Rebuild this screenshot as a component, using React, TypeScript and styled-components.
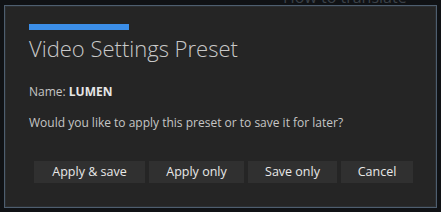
import React from "react";
import styled, { createGlobalStyle } from "styled-components";

const Global = createGlobalStyle`
  html, body { margin: 0; padding: 0; background: #101215; }
  body { width: 441px; height: 212px; overflow: hidden; font-family: "Open Sans", "Noto Sans", sans-serif; }
`;

const Page = styled.div`
  position: relative;
  width: 441px;
  height: 212px;
  padding-top: 5px;
  box-sizing: border-box;
`;

const BehindText = styled.div`
  position: absolute;
  left: 283px;
  top: -14px;
  font-size: 16px;
  color: #3a4047;
  white-space: nowrap;
`;

const Dialog = styled.div`
  position: relative;
  margin-left: 4px;
  width: 433px;
  height: 203px;
  box-sizing: border-box;
  background: #252525;
  border: 1px solid #4e5e6f;
  box-shadow: inset 0 0 0 1px #2b2e31;
  padding: 18px 23px 0 24px;
  display: flex;
  flex-direction: column;
`;

const AccentBar = styled.div`
  width: 100px;
  height: 6px;
  background: #3b8ee8;
`;

const Title = styled.h1`
  margin: 3px 0 0 0;
  font-size: 22px;
  font-weight: 300;
  color: #c9c9c9;
  line-height: 30px;
`;

const Text = styled.p<{ $top: number }>`
  margin: ${(p) => p.$top}px 0 0 0;
  font-size: 12px;
  color: #c6c6c6;
  line-height: 18px;
  white-space: nowrap;
`;

const Strong = styled.b`
  font-weight: 700;
  color: #e6e6e6;
`;

const ButtonRow = styled.div`
  margin-top: 29px;
  display: flex;
  justify-content: flex-end;
  gap: 4px;
`;

const Button = styled.button<{ $w: number }>`
  flex: 0 0 auto;
  width: ${(p) => p.$w}px;
  height: 22px;
  padding: 0;
  border: none;
  background: #303030;
  color: #e8e8e8;
  font-family: "Open Sans", "Noto Sans", sans-serif;
  font-size: 12.5px;
  line-height: 22px;
  white-space: nowrap;
  cursor: pointer;
`;

export default function App() {
  return (
    <Page>
      <Global />
      <BehindText>How to translate</BehindText>
      <Dialog>
        <AccentBar />
        <Title>Video Settings Preset</Title>
        <Text $top={20}>
          Name: <Strong>LUMEN</Strong>
        </Text>
        <Text $top={13}>Would you like to apply this preset or to save it for later?</Text>
        <ButtonRow>
          <Button $w={111}>Apply &amp; save</Button>
          <Button $w={95}>Apply only</Button>
          <Button $w={89}>Save only</Button>
          <Button $w={72}>Cancel</Button>
        </ButtonRow>
      </Dialog>
    </Page>
  );
}
